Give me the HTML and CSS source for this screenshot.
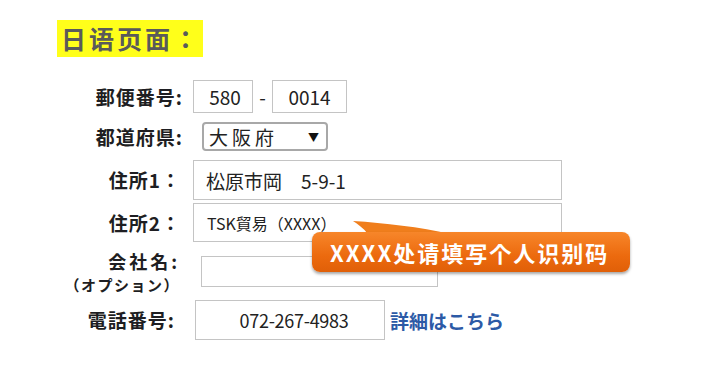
FILE: index.html
```html
<!DOCTYPE html>
<html lang="ja">
<head>
<meta charset="utf-8">
<link rel="stylesheet" href="styles.css">
</head>
<body>
<div class="page">
  <div class="title-wrap"><span class="title">日语页面：</span></div>
  <div class="form">
    <div class="row row-zip">
      <div class="label">郵便番号:</div>
      <div class="field">
        <div class="box zip1">580</div>
        <span class="dash">-</span>
        <div class="box zip2">0014</div>
      </div>
    </div>
    <div class="row row-pref">
      <div class="label">都道府県:</div>
      <div class="field">
        <div class="select"><span class="sel-text">大阪府</span><span class="arrow">▼</span></div>
      </div>
    </div>
    <div class="row row-addr1">
      <div class="label label-addr">住所1：</div>
      <div class="field">
        <div class="box addr addr1">松原市岡　5-9-1</div>
      </div>
    </div>
    <div class="row row-addr2">
      <div class="label label-addr">住所2：</div>
      <div class="field">
        <div class="box addr addr2">TSK貿易（XXXX）</div>
      </div>
    </div>
    <div class="row row-company">
      <div class="label label-company">
        <div class="lc-main">会社名:</div>
        <div class="lc-sub">（オプション）</div>
      </div>
      <div class="field">
        <div class="box company"></div>
      </div>
    </div>
    <div class="row row-phone">
      <div class="label label-phone">電話番号:</div>
      <div class="field">
        <div class="box phone">072-267-4983</div>
        <a class="link" href="#">詳細はこちら</a>
      </div>
    </div>
  </div>
  <svg class="tail" width="110" height="18" viewBox="0 0 110 18">
    <path d="M3 2 C 35 4 70 8 100 15 L 18 15 C 13 9 8 5 3 2 Z" fill="#f07e1c"/>
  </svg>
  <div class="tooltip">XXXX处请填写个人识别码</div>
</div>
</body>
</html>
```

FILE: styles.css
```css
html, body {
  margin: 0;
  padding: 0;
  background: #ffffff;
}

body {
  font-family: "Noto Sans CJK JP", "Noto Sans", sans-serif;
  color: #222;
  width: 710px;
  height: 367px;
  overflow: hidden;
}

.page {
  position: relative;
  padding-top: 20px;
}

.title-wrap {
  padding-left: 57px;
  height: 37px;
}

.title {
  display: inline-block;
  background: #ffff1a;
  color: #5a5a5a;
  font-family: "Noto Sans CJK SC", sans-serif;
  font-weight: 700;
  font-size: 25px;
  line-height: 37px;
  height: 37px;
  letter-spacing: 3px;
  padding: 0 2px 0 4px;
}

.form {
  display: flex;
  flex-direction: column;
}

.row {
  display: flex;
  align-items: center;
  gap: 10px;
}

.label {
  width: 183px;
  flex: none;
  text-align: right;
  font-weight: 700;
  font-size: 19px;
  letter-spacing: 1px;
  color: #1e1e22;
  line-height: 24px;
}

.label-addr {
  padding-right: 2px;
  box-sizing: border-box;
}

.label-phone {
  padding-right: 8px;
  box-sizing: border-box;
}

.label-company {
  padding-right: 3px;
  box-sizing: border-box;
  line-height: normal;
}

.lc-main {
  font-size: 18px;
  letter-spacing: 3px;
}

.lc-sub {
  font-size: 15px;
  letter-spacing: 1.5px;
}

.field {
  display: flex;
  align-items: center;
}

.box {
  box-sizing: border-box;
  border: 1px solid #c4c4c4;
  background: #fff;
  font-size: 19px;
  color: #222;
  display: flex;
  align-items: center;
}

.row-zip { margin-top: 23px; }
.row-pref { margin-top: 9px; }
.row-addr1 { margin-top: 9px; }
.row-addr2 { margin-top: 3px; }
.row-company { margin-top: 6px; }
.row-phone { margin-top: 5px; }

.zip1 {
  width: 60px;
  height: 33px;
  justify-content: center;
  padding-left: 4px;
}

.zip2 {
  width: 75px;
  height: 33px;
  justify-content: center;
}

.dash {
  width: 19px;
  text-align: center;
  font-size: 19px;
}

.select {
  box-sizing: border-box;
  margin-left: 9px;
  width: 126px;
  height: 29px;
  border: 2px solid #a8a8a8;
  border-radius: 4px;
  display: flex;
  align-items: center;
  justify-content: space-between;
  padding: 0 7px 0 5px;
  background: #fff;
}

.sel-text {
  font-size: 19px;
  letter-spacing: 4px;
  color: #222;
}

.arrow {
  font-size: 11px;
  color: #111;
}

.addr {
  width: 369px;
  padding-left: 12px;
}

.addr1 {
  height: 40px;
  font-size: 19px;
}

.addr2 {
  height: 39px;
  font-size: 16px;
  padding-left: 13px;
}

.company {
  margin-left: 8px;
  width: 237px;
  height: 31px;
}

.phone {
  margin-left: 2px;
  width: 190px;
  height: 40px;
  justify-content: center;
  font-size: 18px;
  letter-spacing: -0.3px;
  padding-left: 8px;
}

.link {
  margin-left: 5px;
  font-size: 19px;
  font-weight: 700;
  color: #2c5aa6;
  text-decoration: none;
}

.tail {
  position: absolute;
  left: 350px;
  top: 219px;
}

.tooltip {
  position: absolute;
  left: 312px;
  top: 232px;
  width: 318px;
  height: 40px;
  box-sizing: border-box;
  border-radius: 8px;
  background: linear-gradient(#f7862a, #ec6a0e 60%, #e05f08);
  box-shadow: 0 2px 3px rgba(0, 0, 0, 0.35);
  color: #fff;
  font-family: "Noto Sans CJK SC", sans-serif;
  font-weight: 700;
  font-size: 22px;
  letter-spacing: 2px;
  line-height: 40px;
  padding-left: 18px;
  white-space: nowrap;
}
```
